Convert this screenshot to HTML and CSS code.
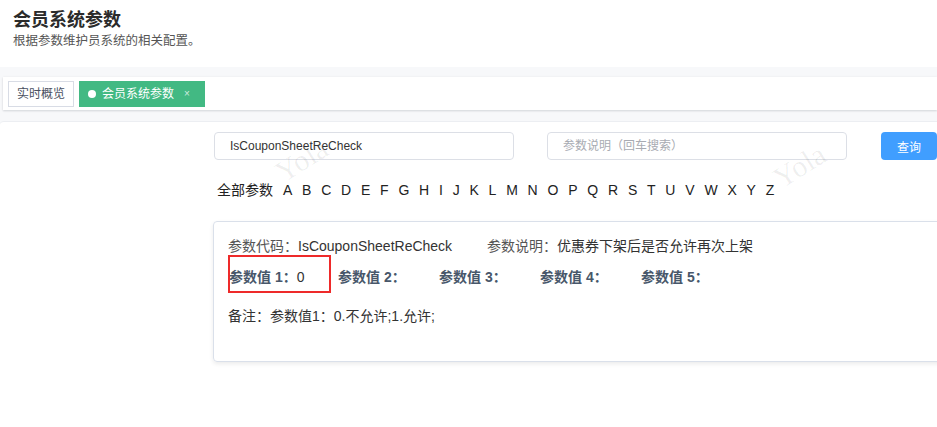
FILE: index.html
```html
<!DOCTYPE html>
<html lang="zh-CN">
<head>
<meta charset="utf-8">
<title>会员系统参数</title>
<link rel="stylesheet" href="styles.css">
</head>
<body>
<header class="page-header">
  <h1 class="page-title">会员系统参数</h1>
  <p class="page-desc">根据参数维护员系统的相关配置。</p>
</header>
<div class="main">
  <nav class="tags-bar">
    <span class="tag">实时概览</span>
    <span class="tag tag-active"><i class="tag-dot"></i>会员系统参数<span class="tag-close">×</span></span>
  </nav>
  <section class="panel">
    <div class="watermark wm1">Yola</div>
    <div class="watermark wm2">Yola</div>
    <div class="search-row">
      <div class="input"><span class="input-text">IsCouponSheetReCheck</span></div>
      <div class="input"><span class="input-placeholder">参数说明（回车搜索）</span></div>
      <button class="btn-primary">查询</button>
    </div>
    <div class="letters">
      <span class="all">全部参数</span>
      <span class="letter">A</span><span class="letter">B</span><span class="letter">C</span><span class="letter">D</span><span class="letter">E</span><span class="letter">F</span><span class="letter">G</span><span class="letter">H</span><span class="letter">I</span><span class="letter">J</span><span class="letter">K</span><span class="letter">L</span><span class="letter">M</span><span class="letter">N</span><span class="letter">O</span><span class="letter">P</span><span class="letter">Q</span><span class="letter">R</span><span class="letter">S</span><span class="letter">T</span><span class="letter">U</span><span class="letter">V</span><span class="letter">W</span><span class="letter">X</span><span class="letter">Y</span><span class="letter">Z</span>
    </div>
    <div class="card">
      <div class="card-row row1">
        <div class="field code"><span class="lbl">参数代码：</span><span class="val">IsCouponSheetReCheck</span></div>
        <div class="field"><span class="lbl">参数说明：</span><span class="val">优惠券下架后是否允许再次上架</span></div>
      </div>
      <div class="card-row row2">
        <div class="pv"><span class="blbl">参数值 1：</span><span class="val">0</span><span class="highlight"></span></div>
        <div class="pv"><span class="blbl">参数值 2：</span></div>
        <div class="pv"><span class="blbl">参数值 3：</span></div>
        <div class="pv"><span class="blbl">参数值 4：</span></div>
        <div class="pv"><span class="blbl">参数值 5：</span></div>
      </div>
      <div class="card-row row3">
        <span class="val">备注：参数值1：0.不允许;1.允许;</span>
      </div>
    </div>
  </section>
</div>
</body>
</html>
```
FILE: styles.css
```css
html, body {
  margin: 0;
  padding: 0;
  height: 100%;
  overflow: hidden;
  background: #fff;
  font-family: "Liberation Sans", "Noto Sans CJK SC", sans-serif;
  color: #333;
}

.page-header {
  height: 67px;
  box-sizing: border-box;
  padding: 10px 13px 0;
}
.page-title {
  margin: 0;
  font-size: 18px;
  line-height: 20px;
  font-weight: bold;
  color: #2b2b2b;
}
.page-desc {
  margin: 3px 0 0;
  font-size: 12.5px;
  line-height: 16px;
  color: #555;
}

.main {
  background: #f7f8fa;
  padding-top: 10px;
  height: calc(100% - 67px);
  box-sizing: border-box;
  display: flex;
  flex-direction: column;
}

.tags-bar {
  height: 33px;
  box-sizing: border-box;
  margin-left: 3px;
  background: #fff;
  display: flex;
  align-items: flex-start;
  gap: 5px;
  padding: 4px 0 0 5px;
  box-shadow: 0 1px 2px rgba(0, 21, 41, 0.14), 0 0 3px rgba(0, 21, 41, 0.04);
}
.tag {
  height: 26px;
  box-sizing: border-box;
  border: 1px solid #d8dce5;
  padding: 0 8px;
  font-size: 12px;
  line-height: 24px;
  color: #495060;
  display: flex;
  align-items: center;
  background: #fff;
}
.tag-active {
  background: #42b983;
  border-color: #42b983;
  color: #fff;
  padding: 0 14px 0 8px;
}
.tag-dot {
  width: 8px;
  height: 8px;
  border-radius: 50%;
  background: #fff;
  margin-right: 6px;
}
.tag-close {
  font-size: 10px;
  margin-left: 10px;
  color: rgba(255, 255, 255, 0.75);
}

.panel {
  position: relative;
  flex: 1;
  margin-top: 11px;
  background: #fff;
  border-top: 1px solid #eceef2;
  border-top-left-radius: 4px;
  padding: 10px 0 0 214px;
  overflow: hidden;
}

.watermark {
  position: absolute;
  font-family: "Liberation Serif", serif;
  font-size: 30px;
  color: rgba(0, 0, 0, 0.065);
  transform: rotate(-32deg);
  pointer-events: none;
  z-index: 2;
}
.wm1 { left: 274px; top: 21px; }
.wm2 { left: 772px; top: 27px; }

.search-row {
  display: flex;
  align-items: center;
}
.input {
  width: 300px;
  height: 28px;
  box-sizing: border-box;
  border: 1px solid #dcdfe6;
  border-radius: 4px;
  padding-left: 15px;
  font-size: 12px;
  line-height: 26px;
  margin-right: 33px;
}
.input-text { color: #333; }
.input-placeholder { color: #a8abb2; }
.btn-primary {
  height: 28px;
  margin-left: 1px;
  padding: 0 16px;
  border: none;
  border-radius: 4px;
  background: #409eff;
  color: #fff;
  font-family: inherit;
  font-size: 12px;
  white-space: nowrap;
}

.letters {
  margin: 20px 0 0 3px;
  font-size: 14px;
  line-height: 20px;
  color: #222;
  display: flex;
  white-space: nowrap;
}
.letters .all {
  margin-right: 5px;
}
.letter {
  padding: 0 4.9px;
}

.card {
  margin: 21px 0 0 -1px;
  width: 780px;
  box-sizing: border-box;
  border: 1px solid #dae0ea;
  border-radius: 4px;
  box-shadow: 0 2px 4px rgba(0, 0, 0, 0.08);
  padding: 14px 0 35px 14px;
  font-size: 14px;
  line-height: 20px;
}
.card-row {
  display: flex;
  white-space: nowrap;
}
.row2 { margin-top: 11px; padding-left: 1px; }
.row3 { margin-top: 19px; }
.field.code { width: 259px; }
.lbl { color: #555; }
.val { color: #333; }
.blbl { color: #48576a; font-weight: bold; }
.pv { position: relative; width: 101px; }
.pv:first-child { width: 109px; }
.highlight {
  position: absolute;
  left: -1px;
  top: -12px;
  width: 103px;
  height: 38px;
  box-sizing: border-box;
  border: 2px solid #ee2a2a;
}
```
